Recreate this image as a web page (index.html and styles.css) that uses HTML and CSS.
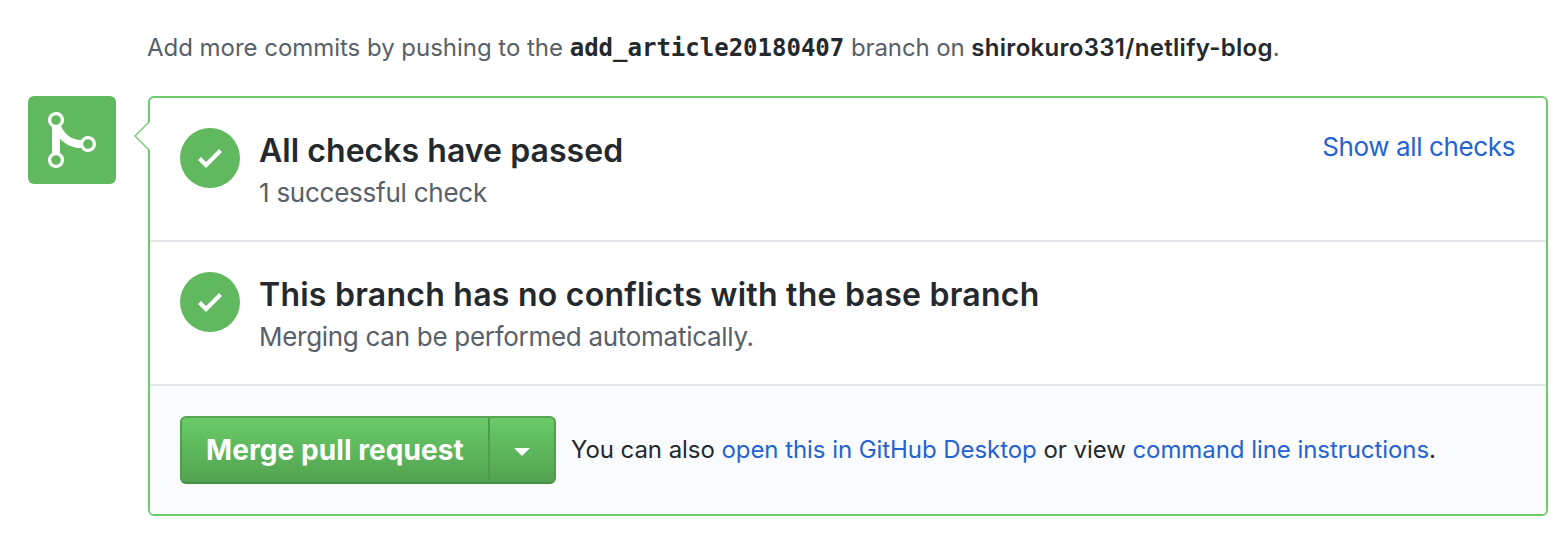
FILE: index.html
```html
<!DOCTYPE html>
<html lang="en">
<head>
<meta charset="utf-8">
<title>Merge pull request</title>
<link rel="stylesheet" href="styles.css">
</head>
<body>
<main class="page">
  <p class="push-hint"><span class="hint-a">Add more commits by pushing to the</span> <strong class="branch">add_article20180407</strong> <span class="hint-b">branch on</span> <strong class="repo">shirokuro331/netlify-blog</strong>.</p>
  <div class="merge">
    <div class="merge-badge">
      <svg width="48" height="64" viewBox="0 0 12 16" fill="#fff" aria-hidden="true"><path fill-rule="evenodd" d="M10 7c-.73 0-1.38.41-1.73 1.02V8C7.22 7.98 6 7.64 5.14 6.98c-.75-.58-1.5-1.61-1.89-2.44A1.993 1.993 0 0 0 2 .99C.89.99 0 1.89 0 3a2 2 0 0 0 1 1.72v6.56c-.59.35-1 .99-1 1.72 0 1.11.89 2 2 2a1.993 1.993 0 0 0 1-3.72V7.67c.67.7 1.44 1.27 2.3 1.69.86.42 2.03.63 2.97.64v-.02c.36.61 1 1.02 1.73 1.02 1.11 0 2-.89 2-2 0-1.11-.89-2-2-2zm-6.8 6c0 .66-.55 1.2-1.2 1.2-.65 0-1.2-.55-1.2-1.2 0-.65.55-1.2 1.2-1.2.65 0 1.2.55 1.2 1.2zm0-10c0 .66-.55 1.2-1.2 1.2C1.34 4.2.8 3.66.8 3c0-.65.55-1.2 1.2-1.2.65 0 1.2.55 1.2 1.2zm8 6c0 .66-.55 1.2-1.2 1.2-.65 0-1.2-.55-1.2-1.2 0-.65.55-1.2 1.2-1.2.65 0 1.2.55 1.2 1.2z"/></svg>
    </div>
    <section class="panel">
      <svg class="panel-arrow" width="16" height="30" viewBox="0 0 16 30" aria-hidden="true"><path d="M16 0.5L1 15L16 29.5z" fill="#fff"/><path d="M15 1L1 15L15 29" fill="none" stroke="#6dcb6b" stroke-width="1.3"/></svg>
      <div class="row">
        <span class="status"><svg width="24" height="32" viewBox="0 0 12 16" fill="#fff" aria-hidden="true"><path d="M12 5l-8 8-4-4 1.5-1.5L4 10l6.5-6.5z"/></svg></span>
        <div class="info">
          <h3 class="title title-checks">All checks have passed</h3>
          <p class="detail detail-checks">1 successful check</p>
        </div>
        <a class="show-all">Show all checks</a>
      </div>
      <div class="row">
        <span class="status"><svg width="24" height="32" viewBox="0 0 12 16" fill="#fff" aria-hidden="true"><path d="M12 5l-8 8-4-4 1.5-1.5L4 10l6.5-6.5z"/></svg></span>
        <div class="info">
          <h3 class="title title-conflicts">This branch has no conflicts with the base branch</h3>
          <p class="detail detail-conflicts">Merging can be performed automatically.</p>
        </div>
      </div>
      <div class="actions">
        <div class="button-group">
          <button class="button button-main">Merge pull request</button>
          <button class="button button-menu" aria-label="Select merge method"><span class="caret"></span></button>
        </div>
        <p class="alternatives">You can also <a>open this in GitHub Desktop</a> or view <a>command line instructions</a>.</p>
      </div>
    </section>
  </div>
</main>
</body>
</html>
```
FILE: styles.css
```css
* { box-sizing: border-box; }
body { margin: 0; background: #fff; color: #24292e; font-family: Inter, "Liberation Sans", sans-serif; font-weight: 430; }
h3, p { margin: 0; }
a { color: #2364d2; text-decoration: none; }
.page { width: 1568px; height: 540px; padding: 30px 20px 0 28px; }
.push-hint { margin-left: 119px; height: 66px; font-size: 24px; line-height: 36px; color: #586069; white-space: nowrap; }
.push-hint strong { color: #24292e; font-weight: 600; }
.push-hint .branch { font-family: "DejaVu Sans Mono", monospace; font-weight: 700; }
.hint-a { letter-spacing: -0.03px; }
.hint-b { letter-spacing: -0.12px; }
.repo { letter-spacing: 0.3px; }
.merge { display: flex; gap: 32px; align-items: flex-start; }
.merge-badge { display: flex; justify-content: center; width: 88px; height: 88px; padding-top: 12px; border-radius: 6px; background: #60b95e; }
.panel { position: relative; flex: 1; height: 420px; border: 2px solid #6dcb6b; border-radius: 6px; }
.panel-arrow { position: absolute; left: -16px; top: 23px; }
.row { display: flex; height: 144px; padding: 30px 31px 0 30px; border-bottom: 2px solid #e1e4e8; }
.status { display: flex; justify-content: center; width: 60px; height: 60px; padding-top: 14px; border-radius: 50%; background: #60b95e; }
.info { flex: 1; margin-left: 19px; white-space: nowrap; }
.title { font-size: 32px; line-height: 46px; font-weight: 600; }
.title-checks { letter-spacing: 0.05px; }
.title-conflicts { letter-spacing: 0.25px; }
.detail { padding-top: 1px; font-size: 26px; line-height: 36px; color: #586069; }
.detail-checks { letter-spacing: -0.25px; }
.detail-conflicts { letter-spacing: -0.29px; }
.show-all { font-size: 26px; line-height: 38px; letter-spacing: -0.38px; white-space: nowrap; }
.actions { display: flex; height: 128px; padding: 30px; background: #fafbfc; border-radius: 0 0 4px 4px; }
.button-group { display: flex; width: 376px; height: 68px; border: 2px solid; border-color: #55a553 #509d4e #488f46; border-radius: 6px; overflow: hidden; background: linear-gradient(#69cb67, #52a350); }
.button { border: 0; padding: 0; background: none; color: #fff; font-family: inherit; }
.button-main { flex: 1; padding-bottom: 1px; font-size: 28px; font-weight: 700; letter-spacing: 0.08px; white-space: nowrap; }
.button-menu { display: flex; align-items: center; justify-content: center; width: 66px; padding-top: 4px; border-left: 2px solid #4f9c4d; }
.caret { width: 16px; height: 8px; background: #fff; clip-path: polygon(0 0, 100% 0, 50% 100%); }
.alternatives { margin-left: 15px; font-size: 24px; line-height: 67px; letter-spacing: -0.06px; white-space: nowrap; }
```
